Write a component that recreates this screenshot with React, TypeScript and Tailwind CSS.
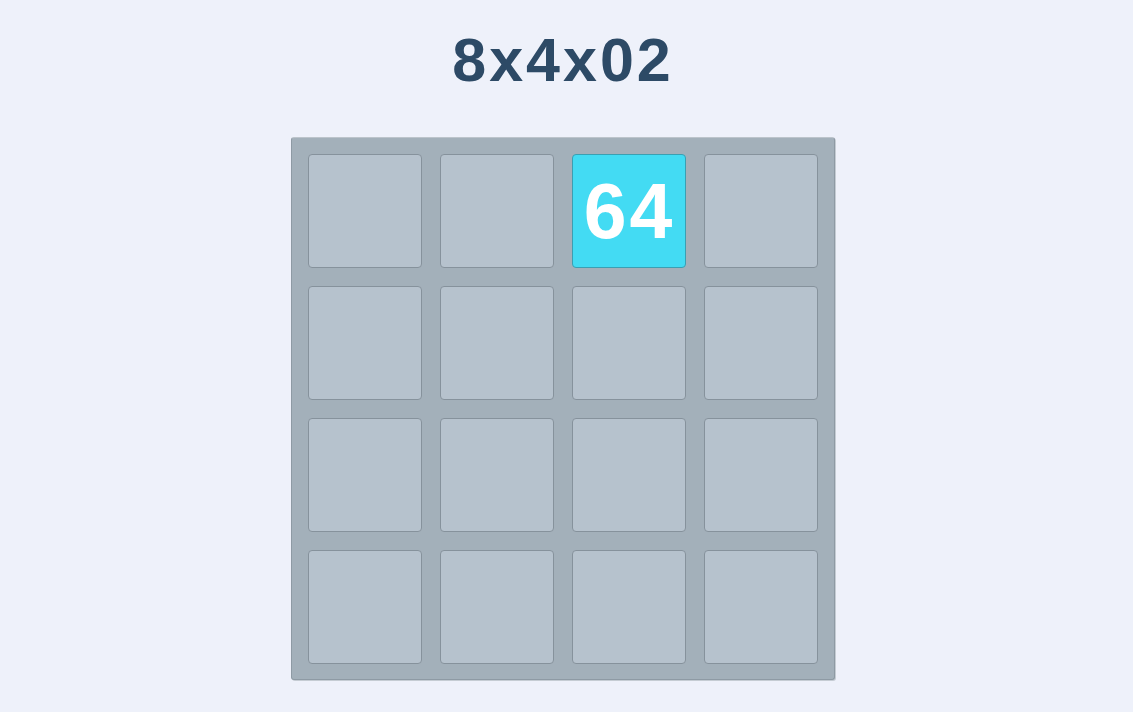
const cells: (number | null)[] = [
  null, null, 64, null,
  null, null, null, null,
  null, null, null, null,
  null, null, null, null,
];

export default function App() {
  return (
    <div
      className="min-h-[712px] w-full bg-[#eef1fa] flex flex-col items-center"
      style={{ fontFamily: '"Liberation Sans", Arial, sans-serif' }}
    >
      <h1 className="mt-[30px] ml-[-7px] text-[61px] leading-[60px] font-bold tracking-[3px] text-[#2d4a66]">
        8x4x02
      </h1>
      <div className="mt-[47px] ml-[-8px] w-[544px] h-[543px] rounded-[3px] border border-[#8e9aa4] border-t-[#bcc4cb] bg-[#a3b0ba] pt-4 px-4 grid grid-cols-4 content-start gap-[18px] shadow-[1px_1px_0_#c5ccd3]">
        {cells.map((v, i) =>
          v ? (
            <div
              key={i}
              className="w-[114px] h-[114px] rounded-[4px] border border-[#3a9fb2] bg-[#43dbf3] flex items-center justify-center text-white font-bold text-[77px] tracking-[3px] pl-[2px] leading-none"
            >
              {v}
            </div>
          ) : (
            <div
              key={i}
              className="w-[114px] h-[114px] rounded-[4px] border border-[#86929c] bg-[#b6c2cd]"
            />
          )
        )}
      </div>
    </div>
  );
}
